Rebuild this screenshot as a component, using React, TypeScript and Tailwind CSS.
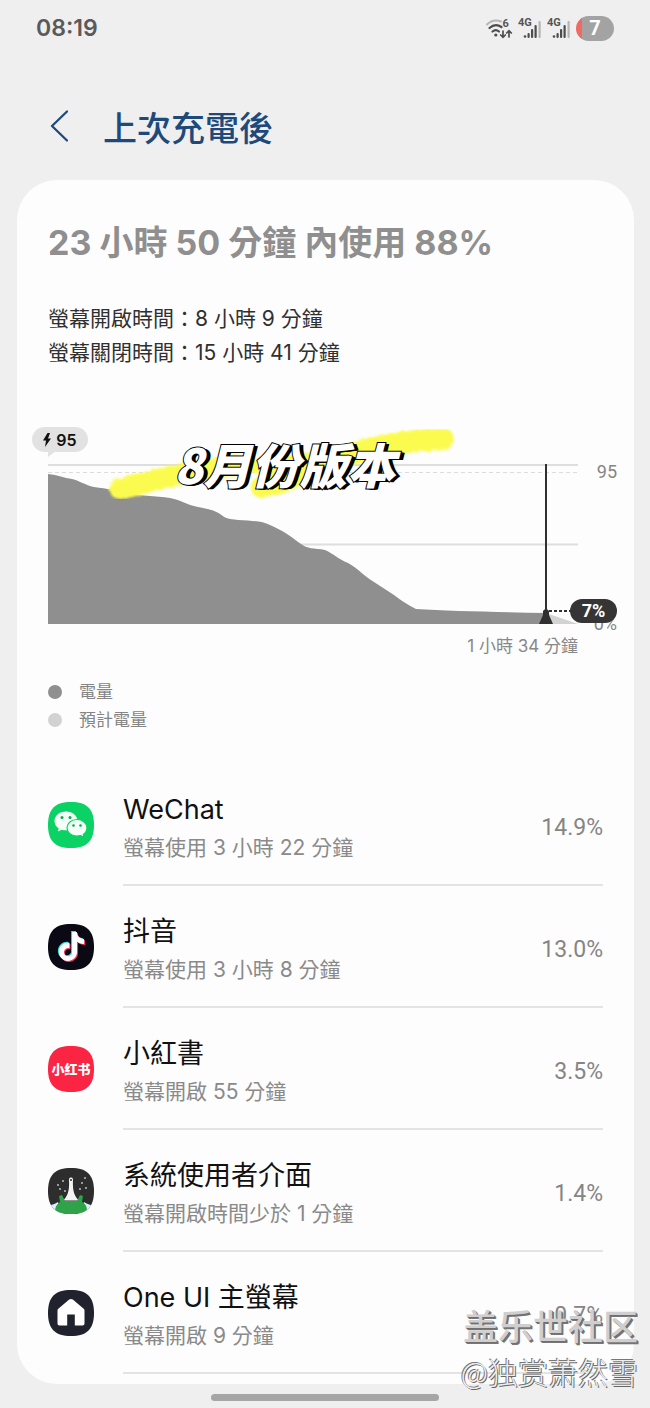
import type { ReactNode } from "react";
import { SiTiktok } from "react-icons/si";

type AppUsage = {
  name: string;
  detail: string;
  percent: string;
  icon: ReactNode;
};

const squircle = "M23 0C39 0 46 7 46 23S39 46 23 46 0 39 0 23 7 0 23 0Z";

function WeChatIcon() {
  return (
    <svg viewBox="0 0 46 46" className="size-[46px]" aria-hidden="true">
      <path d={squircle} fill="#0bd264" />
      <path d="M18 9.500c-6.500 0-11.500 4.200-11.500 9.500 0 3 1.600 5.600 4.200 7.400l-.8 3.200 3.800-1.900c1.400.4 2.800.6 4.300.6 6.500 0 11.500-4.200 11.500-9.400S24.500 9.500 18 9.500Z" fill="#f4fff8" />
      <path d="M29 17.500c-5.700 0-10 3.700-10 8.300s4.300 8.300 10 8.300c1.300 0 2.500-.2 3.600-.5l3.400 1.700-.7-2.900c2.300-1.500 3.700-3.900 3.700-6.600 0-4.600-4.300-8.300-10-8.300Z" fill="#f4fff8" stroke="#0bd264" strokeWidth="1.200" />
      <circle cx="14" cy="15.500" r="1.500" fill="#0aa850" />
      <circle cx="22" cy="15.500" r="1.500" fill="#0aa850" />
      <circle cx="25.500" cy="23.500" r="1.300" fill="#0aa850" />
      <circle cx="32.500" cy="23.500" r="1.300" fill="#0aa850" />
    </svg>
  );
}

function DouyinIcon() {
  return (
    <svg viewBox="0 0 46 46" className="size-[46px]" aria-hidden="true">
      <path d={squircle} fill="#0b0a14" />
      <SiTiktok x="8" y="7" size={29} color="#3be0dc" />
      <SiTiktok x="10" y="9" size={29} color="#f5375c" />
      <SiTiktok x="9" y="8" size={29} color="#ffffff" />
    </svg>
  );
}

function RedNoteIcon() {
  return (
    <div className="relative flex size-[46px] items-center justify-center">
      <svg viewBox="0 0 46 46" className="absolute inset-0" aria-hidden="true">
        <path d={squircle} fill="#fb2543" />
      </svg>
      <span className="relative font-['Noto_Sans_CJK_SC',sans-serif] text-[13px] font-black text-white">小红书</span>
    </div>
  );
}

function SystemUiIcon() {
  return (
    <svg viewBox="0 0 46 46" className="size-[46px]" aria-hidden="true">
      <clipPath id="system-ui-shape">
        <path d={squircle} />
      </clipPath>
      <g clipPath="url(#system-ui-shape)">
        <rect width="46" height="46" fill="#2d2d2d" />
        <path d="M23 9.500c-2 0-2.300 2-1.900 4.500.2 9-1.600 14.500-6.100 18.500h16c-4.500-4-6.300-9.500-6.100-18.500.4-2.500.1-4.500-1.900-4.500Z" fill="#f4f4f4" />
        <circle cx="23" cy="12" r="1" fill="#2d2d2d" />
        <path d="M-1 38c5-1 8-2 11-4l4 12H-1ZM47 38c-5-1-8-2-11-4l-4 12h15Z" fill="#dcefff" />
        <path d="M11 28l3-1 3 6h12l3-6 3 1-1 6c4 2 5 5 5 9-8 5-24 5-32 0 0-4 2-7 5-9Z" fill="#2fa347" />
        <g fill="#bdbdbd">
          <circle cx="10" cy="17" r="1" />
          <circle cx="15" cy="13" r="1" />
          <circle cx="12" cy="21" r="1" />
          <circle cx="17" cy="23" r="1" />
          <circle cx="34" cy="15" r="1" />
          <circle cx="32" cy="21" r="1" />
          <circle cx="38" cy="20" r="1" />
          <circle cx="37" cy="10" r="1" />
        </g>
      </g>
    </svg>
  );
}

function HomeIcon() {
  return (
    <svg viewBox="0 0 46 46" className="size-[46px]" aria-hidden="true">
      <path d={squircle} fill="#20222e" />
      <path d="M21.200 9.600 10.300 18.700c-.6.500-.8 1.100-.8 1.800v13c0 1.200.8 2 2 2h7.700V24.500h7.600v11h7.700c1.200 0 2-.8 2-2v-13c0-.7-.2-1.300-.8-1.800L24.800 9.600c-1.100-.9-2.500-.9-3.600 0Z" fill="#fff" />
    </svg>
  );
}

const apps: AppUsage[] = [
  { name: "WeChat", detail: "螢幕使用 3 小時 22 分鐘", percent: "14.9%", icon: <WeChatIcon /> },
  { name: "抖音", detail: "螢幕使用 3 小時 8 分鐘", percent: "13.0%", icon: <DouyinIcon /> },
  { name: "小紅書", detail: "螢幕開啟 55 分鐘", percent: "3.5%", icon: <RedNoteIcon /> },
  { name: "系統使用者介面", detail: "螢幕開啟時間少於 1 分鐘", percent: "1.4%", icon: <SystemUiIcon /> },
  { name: "One UI 主螢幕", detail: "螢幕開啟 9 分鐘", percent: "0.7%", icon: <HomeIcon /> },
];

function SignalIcon() {
  return (
    <svg viewBox="0 0 24 24" className="size-6" aria-hidden="true">
      <text x="0" y="10" fontSize="11" fontWeight="700" fill="#555" fontFamily="Roboto, sans-serif">
        4G
      </text>
      <g fill="#4d4d4d">
        <circle cx="7" cy="20.500" r="1.300" />
        <rect x="9.500" y="17" width="2.200" height="5" rx="1" />
        <rect x="13" y="13" width="2.200" height="9" rx="1" />
        <rect x="16.500" y="9" width="2.200" height="13" rx="1" />
      </g>
      <rect x="20.500" y="5" width="2.200" height="17" rx="1" fill="#b5b5b5" />
    </svg>
  );
}

function StatusBar() {
  return (
    <div className="flex h-14 items-center justify-between pr-9 pl-9">
      <span className="text-[23px] font-semibold text-[#5a5a5a]">08:19</span>
      <div className="flex items-center gap-[5px]">
        <svg viewBox="0 0 28 24" className="h-6 w-7" fill="none" strokeLinecap="round" aria-hidden="true">
          <path d="M2 8.500C6 4.500 11 3.500 16 5.500" stroke="#b5b5b5" strokeWidth="2" />
          <path d="M4.500 12c3.500-3.300 8-3.800 12-1" stroke="#4d4d4d" strokeWidth="2.200" />
          <path d="M7.500 15.500c2-1.600 4.500-1.600 6.500 0" stroke="#4d4d4d" strokeWidth="2.200" />
          <circle cx="10.800" cy="19" r="1.600" fill="#4d4d4d" />
          <path d="M18 15v6m-2.300-2L18 21.300l2.300-2.300M24 21v-6m-2.300 2L24 14.700l2.300 2.300" stroke="#4d4d4d" strokeWidth="1.700" />
          <text x="17.500" y="11" fontSize="11" fontWeight="700" fill="#555" fontFamily="Roboto, sans-serif">
            6
          </text>
        </svg>
        <SignalIcon />
        <SignalIcon />
        <div className="flex h-[25px] w-[38px] items-center justify-center rounded-full bg-[linear-gradient(90deg,#ee6a64_6px,#a3a3a3_6px)] font-[Roboto,sans-serif] text-xl font-bold text-white">
          7
        </div>
      </div>
    </div>
  );
}

function BatteryChart() {
  return (
    <div className="relative mt-[94px] pr-[17px] pl-[31px]">
      <div className="flex">
        <svg viewBox="0 0 530 160" preserveAspectRatio="none" className="h-40 min-w-0 flex-1" aria-hidden="true">
          <path d="M0 1H530M0 80.500H530" stroke="#dedede" strokeWidth="2" />
          <path d="M0 8.500H530" stroke="#dcdcdc" strokeDasharray="4 3" />
          <path d="M498 149L530 160H498Z" fill="#d2d2d2" />
          <path
            d="M0 10C10 11 16 14 24 15C32 17 37 21 46 23C60 25 68 26 76 28C90 32 108 32 122 34C134 36 138 41 150 43C160 45 166 46 172 50C177 54 180 55 190 56C205 57 214 57 222 61C236 67 242 72 253 80C259 85 266 84 277 86C286 90 290 95 300 99C312 106 316 112 326 118L346 131C354 137 360 141 368 145C400 147 450 148 498 149V160H0Z"
            fill="#8f8f8f"
          />
          <path d="M498 0V150" stroke="#303030" strokeWidth="2" />
          <path d="M501 147H526" stroke="#303030" strokeWidth="2" strokeDasharray="3 2" />
          <path d="M495 147Q498 143 501 147V151L505 160H491L495 151Z" fill="#303030" />
        </svg>
        <div className="flex h-[168px] w-[39px] flex-col items-end justify-between font-[Roboto,sans-serif] text-lg leading-4 text-[#858585]">
          <span>95</span>
          <span>0%</span>
        </div>
      </div>
      <p className="mt-[2px] pr-[39px] text-right text-[17px] leading-6 text-[#888]">1 小時 34 分鐘</p>

      <svg viewBox="0 0 360 80" className="absolute -top-10 left-[88px] h-20 w-[360px]" aria-hidden="true">
        <defs>
          <filter id="marker-edge" x="-5%" y="-20%" width="110%" height="140%">
            <feTurbulence type="fractalNoise" baseFrequency="0.300" numOctaves="2" />
            <feDisplacementMap in="SourceGraphic" scale="5" />
            <feGaussianBlur stdDeviation="0.900" />
          </filter>
        </defs>
        <g fill="none" stroke="#fbfb50" strokeLinecap="round" filter="url(#marker-edge)">
          <path d="M15 65C50 56 85 47 130 41" strokeWidth="21" />
          <path d="M157 63C180 59 205 45 225 37C260 25 300 16 338 15" strokeWidth="22" />
          <path d="M150 42L235 32" strokeWidth="14" />
        </g>
      </svg>

      <div className="absolute -top-[37px] left-[15px] flex h-[25px] w-14 items-center justify-center gap-[5px] rounded-full bg-[#e2e2e2] text-base font-semibold text-[#111] after:absolute after:top-6 after:left-4 after:border-t-[6px] after:border-r-[8px] after:border-t-[#e2e2e2] after:border-r-transparent">
        <svg viewBox="0 0 8 14" className="h-3.5 w-2" fill="currentColor" aria-hidden="true">
          <path d="M4.500 0L0 7.500H3L2 14L8 5.500H5L7 0Z" />
        </svg>
        95
      </div>

      <p className="absolute -top-[31px] left-[157px] font-['Noto_Sans_CJK_SC',sans-serif] text-5xl leading-[60px] font-black whitespace-nowrap text-white italic [-webkit-text-stroke:2px_#000] [paint-order:stroke_fill] [text-shadow:1px_0_#000,2px_1px_#000,3px_1px_#000,4px_1px_#000]">
        8月份版本
      </p>

      <span className="absolute top-[135px] right-[17px] flex h-6 w-[47px] items-center justify-center rounded-full bg-[#353535] font-[Roboto,sans-serif] text-lg font-bold text-white">
        7%
      </span>
    </div>
  );
}

function AppRow({ app }: { app: AppUsage }) {
  return (
    <li className="flex h-[122px] items-center gap-[29px]">
      {app.icon}
      <div className="flex h-full min-w-0 flex-1 items-center justify-between border-b-2 border-[#e4e4e4] pt-2">
        <div>
          <h2 className="text-[27px] leading-9 text-[#111]">{app.name}</h2>
          <p className="mt-1 text-[21px] leading-8 text-[#8a8a8a]">{app.detail}</p>
        </div>
        <span className="font-[Roboto,sans-serif] text-[23px] text-[#858585]">{app.percent}</span>
      </div>
    </li>
  );
}

export default function App() {
  return (
    <div className="relative bg-[#efefef] font-[Inter,'Noto_Sans_CJK_TC',sans-serif]">
      <StatusBar />
      <header className="flex h-[124px] items-center gap-[35px] pt-5 pl-[50px]">
        <button type="button" aria-label="返回" className="-mt-1 text-[#1d4a7a]">
          <svg viewBox="0 0 18 32" className="h-8 w-[18px]" fill="none" stroke="currentColor" strokeWidth="2.300" strokeLinecap="round" strokeLinejoin="round" aria-hidden="true">
            <path d="M17 1.500L2 16L17 30.500" />
          </svg>
        </button>
        <h1 className="text-[34px] font-medium text-[#1d4a7a]">上次充電後</h1>
      </header>

      <main className="mr-4 ml-[17px] rounded-[40px] bg-[#fdfdfd] pt-10 pb-[10px]">
        <p className="px-[31px] text-[34px] leading-[46px] font-bold text-[#8f8f8f]">23 小時 50 分鐘 內使用 88%</p>
        <div className="mt-9 px-[31px] text-[21px] leading-[34px] text-[#303030]">
          <p>螢幕開啟時間：8 小時 9 分鐘</p>
          <p>螢幕關閉時間：15 小時 41 分鐘</p>
        </div>

        <BatteryChart />

        <ul className="mt-5 px-[31px] text-[17px] leading-7 text-[#858585]">
          <li className="flex items-center gap-[17px]">
            <span className="size-3.5 rounded-full bg-[#8f8f8f]" />
            電量
          </li>
          <li className="flex items-center gap-[17px]">
            <span className="size-3.5 rounded-full bg-[#d2d2d2]" />
            預計電量
          </li>
        </ul>

        <ul className="mt-[30px] px-[31px]">
          {apps.map((app) => (
            <AppRow key={app.name} app={app} />
          ))}
        </ul>
      </main>

      <div className="flex h-6 justify-center pt-[10px]">
        <div className="h-[7px] w-[228px] rounded-full bg-[#a6a6a6]" />
      </div>

      <div className="absolute right-3 bottom-[14px] text-right font-['Noto_Sans_CJK_SC',sans-serif] whitespace-nowrap">
        <p className="text-[35px] leading-[46px] font-medium text-[#d0cece] [text-shadow:1px_1px_#6f6f6f,2px_2px_#777]">盖乐世社区</p>
        <p className="text-[30px] leading-[46px] font-light text-[#eeeeee] [text-shadow:-1px_-1px_#777,1px_1px_#666]">@独赏萧然雪</p>
      </div>
    </div>
  );
}
